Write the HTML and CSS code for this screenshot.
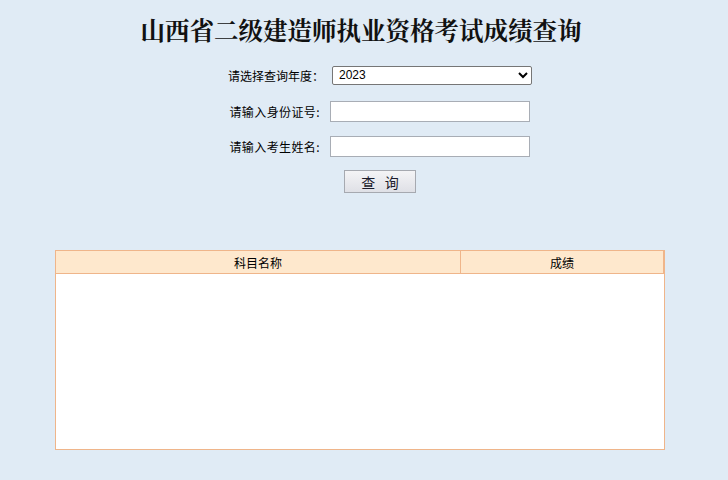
FILE: index.html
```html
<!DOCTYPE html>
<html lang="zh-CN">
<head>
<meta charset="utf-8">
<title>山西省二级建造师执业资格考试成绩查询</title>
<link rel="stylesheet" href="styles.css">
</head>
<body>
<h1 class="title">山西省二级建造师执业资格考试成绩查询</h1>
<form class="form">
  <label class="label">请选择查询年度：</label>
  <div class="ctrl"><select class="select"><option>2023</option></select></div>
  <label class="label label-short">请输入身份证号:</label>
  <div class="ctrl"><input class="input" type="text"></div>
  <label class="label label-short">请输入考生姓名:</label>
  <div class="ctrl"><input class="input" type="text"></div>
</form>
<div class="actions"><button class="btn" type="button">查&nbsp;&nbsp;&nbsp;询</button></div>
<div class="result">
  <div class="head">
    <div class="cell c1">科目名称</div>
    <div class="cell c2">成绩</div>
  </div>
  <div class="body"></div>
</div>
</body>
</html>
```
FILE: styles.css
```css
html, body {
  margin: 0;
  padding: 0;
  background: #e0ebf5;
  font-family: "Liberation Sans", "Noto Sans CJK SC", sans-serif;
  font-size: 12px;
  color: #000;
}
.title {
  margin: 0;
  padding: 15px 6px 0 0;
  height: 31px;
  text-align: center;
  font-family: "Noto Serif CJK SC", "Liberation Serif", "Noto Sans CJK SC", serif;
  font-size: 24.5px;
  font-weight: bold;
  line-height: 30px;
  color: #111;
}
.form {
  margin: 17px 0 0 216px;
  display: grid;
  grid-template-columns: 108px 204px;
  grid-template-rows: 24px 21px 21px;
  column-gap: 6px;
  row-gap: 14px;
  align-items: center;
}
.label {
  text-align: right;
  white-space: nowrap;
  font-family: "Noto Sans CJK SC", sans-serif;
  font-size: 12px;
}
.label-short {
  padding-right: 4px;
  letter-spacing: 0.4px;
}
.ctrl { display: flex; align-items: center; }
.select {
  box-sizing: border-box;
  margin-left: 2px;
  width: 200px;
  height: 19px;
  padding: 0 2px;
  border: 1px solid #767676;
  border-radius: 2px;
  background: #fff;
  font-family: "Liberation Sans", sans-serif;
  font-size: 12px;
  color: #000;
}
.input {
  box-sizing: border-box;
  width: 200px;
  height: 21px;
  margin: 0;
  border: 1px solid #a8adb5;
  background: #fff;
  padding: 0 3px;
}
.actions {
  margin: 13px 0 0 344px;
}
.btn {
  box-sizing: border-box;
  width: 72px;
  height: 23px;
  border: 1px solid #a6a9b0;
  background: linear-gradient(#f4f4f6, #dfe0e6);
  font-family: "Noto Sans CJK SC", sans-serif;
  font-size: 14px;
  color: #1a1a2a;
  padding: 0;
  line-height: 20px;
}
.result {
  margin: 57px 0 0 55px;
  width: 610px;
  height: 200px;
  box-sizing: border-box;
  border: 1px solid #efb58a;
  background: #fff;
  display: flex;
  flex-direction: column;
}
.head {
  box-sizing: border-box;
  display: flex;
  height: 23px;
  background: #fee8cd;
  border-bottom: 1px solid #efb58a;
}
.cell {
  display: flex;
  align-items: center;
  justify-content: center;
  font-family: "Noto Sans CJK SC", sans-serif;
  font-size: 12px;
}
.c1 { width: 404px; border-right: 1px solid #efb58a; }
.c2 { flex: 1; border-right: 1px solid #efb58a; }
.body { flex: 1; }
```
